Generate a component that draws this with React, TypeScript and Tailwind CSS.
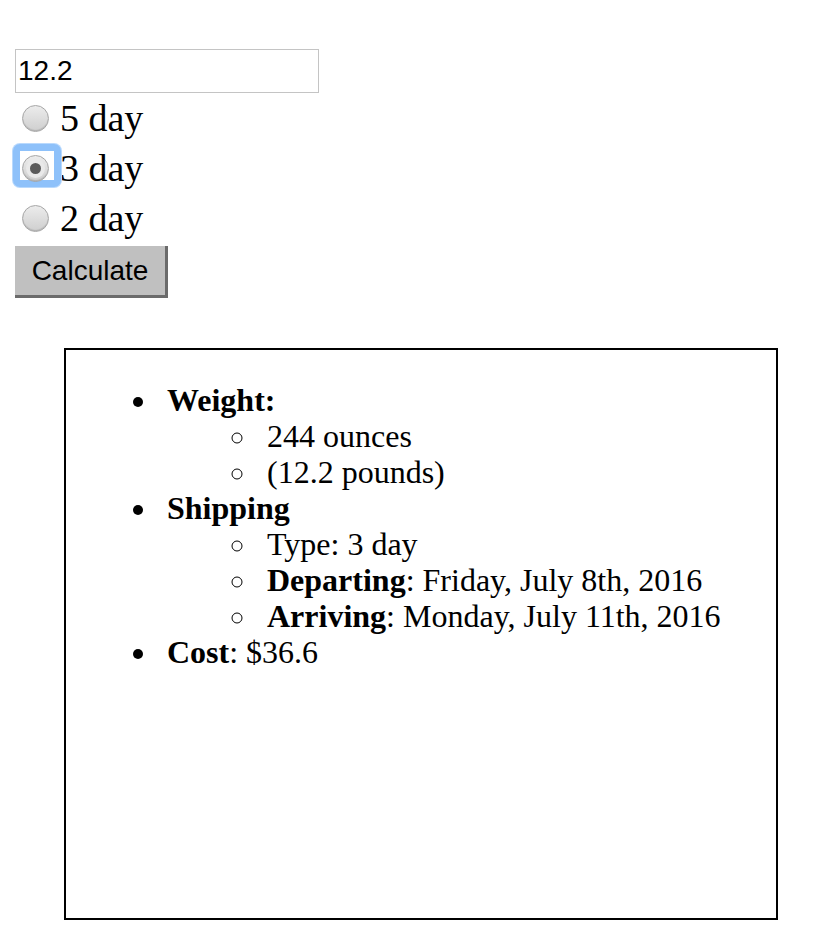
const serif = { fontFamily: '"Liberation Serif", "Times New Roman", serif' };
const sans = { fontFamily: '"Liberation Sans", Arial, sans-serif' };

function Radio({ checked, focused }: { checked?: boolean; focused?: boolean }) {
  const circle = (
    <span className="flex h-[27px] w-[27px] items-center justify-center rounded-full border border-[#a6a6a6] bg-gradient-to-b from-[#ececec] to-[#cfcfcf] shadow-[inset_0_-1px_1px_rgba(0,0,0,0.15)]">
      {checked && (
        <span className="flex h-[19px] w-[19px] items-center justify-center rounded-full bg-[#e9e9e9]">
          <span className="h-[11px] w-[11px] rounded-full bg-[#5a5a5a]" />
        </span>
      )}
    </span>
  );
  if (!focused) return <span className="ml-[7px] mr-[11px] flex">{circle}</span>;
  return (
    <span className="relative ml-[7px] mr-[11px] flex">
      <span className="absolute -left-[9px] -top-[11px] h-[43px] w-[48px] rounded-[7px] border-[7px] border-[#8ec1fa] bg-white shadow-[0_0_0_1px_#b9d9fd]" />
      <span className="relative">{circle}</span>
    </span>
  );
}

const options = [
  { label: "5 day", checked: false },
  { label: "3 day", checked: true },
  { label: "2 day", checked: false },
];

export default function App() {
  return (
    <div className="min-h-[944px] w-[832px] bg-white pl-[15px] pt-[49px] text-black">
      <input
        type="text"
        defaultValue="12.2"
        style={sans}
        className="block h-[44px] w-[304px] border border-[#c4c4c4] px-[2px] text-[28px] leading-none text-black outline-none"
      />

      <div style={serif} className="text-[38px]">
        {options.map((o) => (
          <div key={o.label} className="flex h-[50px] items-center">
            <Radio checked={o.checked} focused={o.checked} />
            <span>{o.label}</span>
          </div>
        ))}
      </div>

      <button
        style={sans}
        className="mt-[3px] block h-[52px] w-[153px] border-b-[3px] border-r-[3px] border-[#6b6b6b] bg-[#c0c0c0] pt-[1px] text-center text-[28px] leading-none text-black"
      >
        Calculate
      </button>

      <div style={serif} className="ml-[49px] mt-[50px] h-[572px] w-[714px] border-2 border-black text-[32px] leading-[36px]">
        <ul className="mt-[32px] list-disc pl-[93px]">
          <li className="pl-[8px]">
            <b>Weight:</b>
            <ul className="list-[circle] pl-[91px]">
              <li className="pl-[9px]">244 ounces</li>
              <li className="pl-[9px]">(12.2 pounds)</li>
            </ul>
          </li>
          <li className="pl-[8px]">
            <b>Shipping</b>
            <ul className="list-[circle] pl-[91px]">
              <li className="pl-[9px]">Type: 3 day</li>
              <li className="pl-[9px]">
                <b>Departing</b>: Friday, July 8th, 2016
              </li>
              <li className="pl-[9px]">
                <b>Arriving</b>: Monday, July 11th, 2016
              </li>
            </ul>
          </li>
          <li className="pl-[8px]">
            <b>Cost</b>: $36.6
          </li>
        </ul>
      </div>
    </div>
  );
}
